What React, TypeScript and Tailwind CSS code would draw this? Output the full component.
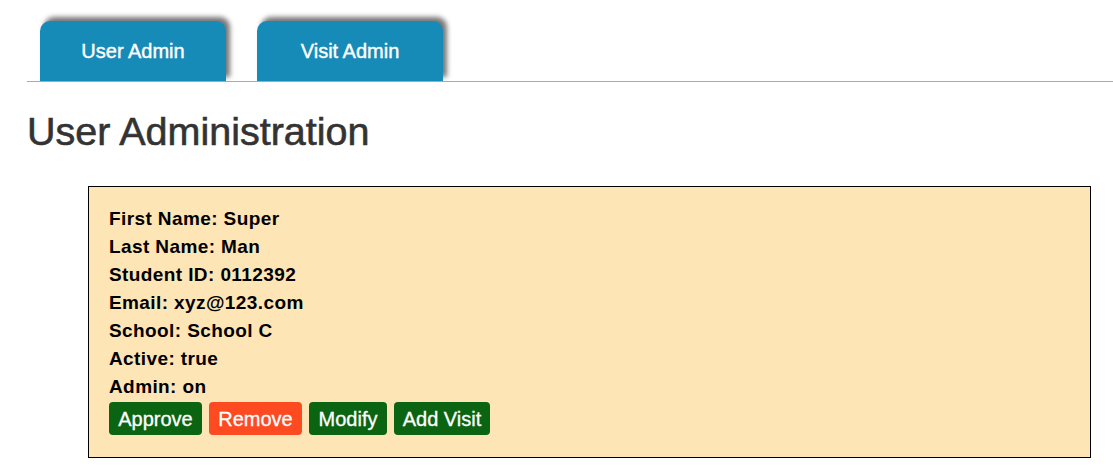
import React from "react";

const fields: [string, string][] = [
  ["First Name", "Super"],
  ["Last Name", "Man"],
  ["Student ID", "0112392"],
  ["Email", "xyz@123.com"],
  ["School", "School C"],
  ["Active", "true"],
  ["Admin", "on"],
];

export default function App() {
  return (
    <div className="min-h-[476px] bg-white" style={{ fontFamily: '"Liberation Sans", Arial, sans-serif' }}>
      <div className="pl-[27px]">
        <div className="flex gap-[31px] pl-[13px] pt-[21px] border-b border-[#aaaaaa]">
          <div className="w-[186px] h-[60px] rounded-t-[10px] bg-[#178bb8] shadow-[4px_-4px_5px_#777] flex items-center justify-center text-white text-[20px] [-webkit-text-stroke:0.4px_white] pb-[1px]">
            User Admin
          </div>
          <div className="w-[186px] h-[60px] rounded-t-[10px] bg-[#178bb8] shadow-[4px_-4px_5px_#777] flex items-center justify-center text-white text-[20px] [-webkit-text-stroke:0.4px_white] pb-[1px]">
            Visit Admin
          </div>
        </div>
      </div>
      <h1 className="pl-[27px] mt-[27px] text-[39.5px] leading-[44px] text-[#333333] [-webkit-text-stroke:0.6px_#333333]">User Administration</h1>
      <div className="ml-[88px] mt-[33px] w-[1003px] h-[272px] border border-black bg-[#fde5b6] pl-[20px] pt-[18px]">
        {fields.map(([k, v]) => (
          <div key={k} className="text-[19px] leading-[28px] font-bold tracking-[0.4px] text-black">
            {k}: {v}
          </div>
        ))}
        <div className="flex gap-[7px] mt-[1px]">
          <button className="h-[33px] w-[93px] rounded-[4px] bg-[#0b6412] text-white text-[20px] [-webkit-text-stroke:0.3px_white]">Approve</button>
          <button className="h-[33px] w-[93px] rounded-[4px] bg-[#fd4a21] text-white text-[20px] [-webkit-text-stroke:0.3px_white]">Remove</button>
          <button className="h-[33px] w-[78px] rounded-[4px] bg-[#0b6412] text-white text-[20px] [-webkit-text-stroke:0.3px_white]">Modify</button>
          <button className="h-[33px] w-[96px] rounded-[4px] bg-[#0b6412] text-white text-[20px] [-webkit-text-stroke:0.3px_white]">Add Visit</button>
        </div>
      </div>
    </div>
  );
}
